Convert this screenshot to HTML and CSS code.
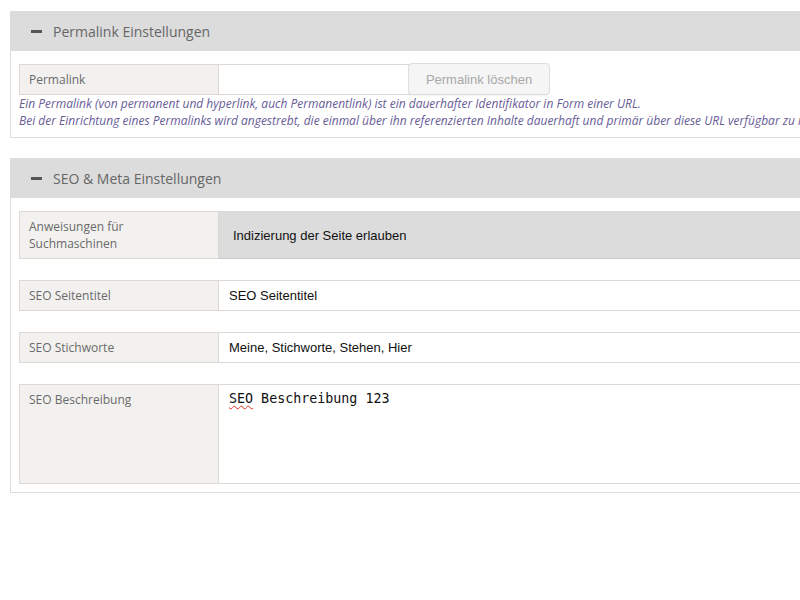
FILE: index.html
```html
<!DOCTYPE html>
<html lang="de">
<head>
<meta charset="utf-8">
<title>Einstellungen</title>
<link rel="stylesheet" href="styles.css">
</head>
<body>
<div class="page">
  <section class="panel">
    <div class="panel-head"><span class="minus"></span><span class="panel-title">Permalink Einstellungen</span></div>
    <div class="panel-body">
      <div class="permalink-row">
        <div class="label">Permalink</div>
        <div class="input short"></div>
        <button class="btn" type="button">Permalink löschen</button>
      </div>
      <p class="help">Ein Permalink (von permanent und hyperlink, auch Permanentlink) ist ein dauerhafter Identifikator in Form einer URL.<br>Bei der Einrichtung eines Permalinks wird angestrebt, die einmal über ihn referenzierten Inhalte dauerhaft und primär über diese URL verfügbar zu machen.</p>
    </div>
  </section>

  <section class="panel second">
    <div class="panel-head"><span class="minus"></span><span class="panel-title">SEO &amp; Meta Einstellungen</span></div>
    <div class="panel-body">
      <div class="row">
        <div class="label">Anweisungen für<br>Suchmaschinen</div>
        <div class="select">Indizierung der Seite erlauben</div>
      </div>
      <div class="row">
        <div class="label">SEO Seitentitel</div>
        <div class="input">SEO Seitentitel</div>
      </div>
      <div class="row">
        <div class="label">SEO Stichworte</div>
        <div class="input">Meine, Stichworte, Stehen, Hier</div>
      </div>
      <div class="row tall">
        <div class="label">SEO Beschreibung</div>
        <div class="textarea"><span class="typo">SEO</span> Beschreibung 123</div>
      </div>
    </div>
  </section>
</div>
</body>
</html>
```

FILE: styles.css
```css
html, body {
  margin: 0;
  padding: 0;
  background: #fff;
  overflow: hidden;
}
.page {
  padding: 11px 0 0 10px;
  width: 1200px;
  font-family: "Open Sans", "DejaVu Sans", sans-serif;
}
.panel {
  border: 1px solid #dddddd;
  background: #fff;
}
.panel.second {
  margin-top: 20px;
}
.panel-head {
  height: 39px;
  background: #dcdcdc;
  display: flex;
  align-items: center;
  padding-left: 20px;
}
.minus {
  width: 11px;
  height: 3px;
  background: #555;
  margin-right: 11px;
}
.panel-title {
  font-size: 14px;
  color: #666;
}
.panel-body {
  padding: 12px 8px 8px 8px;
}
.second .panel-body {
  padding-top: 13px;
}
.permalink-row {
  display: flex;
  align-items: center;
}
.label {
  width: 180px;
  flex: none;
  padding: 6px 9px;
  font-size: 12px;
  line-height: 17px;
  color: #6a6a6a;
  background: #f2f1ef;
  border: 1px solid #ddd8d2;
}
.permalink-row .label {
  height: 17px;
}
.input {
  flex: 1;
  border: 1px solid #ddd8d2;
  border-left: none;
  padding: 0 10px;
  display: flex;
  align-items: center;
  font-family: "Liberation Sans", Arial, sans-serif;
  font-size: 13px;
  color: #111;
  background: #fff;
}
.input.short {
  flex: none;
  width: 170px;
  height: 29px;
}
.btn {
  margin-left: -2px;
  height: 32px;
  width: 142px;
  border: 1px solid #dedede;
  border-radius: 4px;
  background: #f5f5f5;
  color: #a8a8a8;
  font-family: "Liberation Sans", Arial, sans-serif;
  font-size: 13px;
  box-shadow: 0 1px 1px rgba(0,0,0,0.05);
  padding: 0;
}
.help {
  margin: 0;
  font-size: 12px;
  line-height: 17px;
  font-style: italic;
  color: #685c97;
  white-space: nowrap;
}
.row {
  display: flex;
  margin-bottom: 21px;
}
.row:last-child {
  margin-bottom: 0;
}
.select {
  flex: 1;
  background: #dcdcdc;
  border-top: 1px solid #dcdcdc;
  border-bottom: 1px solid #c8c8c8;
  padding: 0 14px;
  display: flex;
  align-items: center;
  font-family: "Liberation Sans", Arial, sans-serif;
  font-size: 13px;
  color: #111;
}
.row.tall .label {
  height: 86px;
}
.textarea {
  flex: 1;
  border: 1px solid #ddd8d2;
  border-left: none;
  padding: 5px 10px;
  font-family: "DejaVu Sans Mono", monospace;
  font-size: 13.333px;
  line-height: 17px;
  color: #111;
}
.typo {
  text-decoration: underline wavy #e03030;
  text-decoration-thickness: 1px;
  text-underline-offset: 2px;
}
```
